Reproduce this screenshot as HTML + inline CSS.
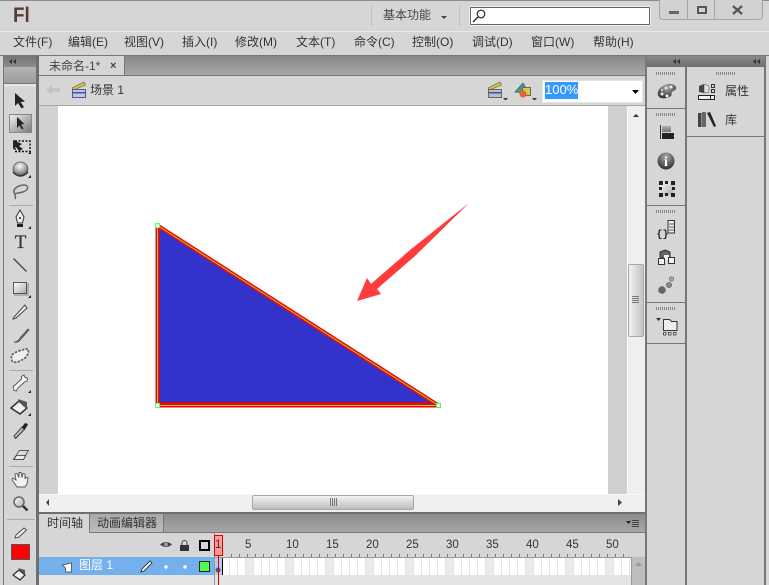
<!DOCTYPE html>
<html><head><meta charset="utf-8">
<style>
html,body{margin:0;padding:0;background:#d6d6d6;}
#r{position:relative;width:769px;height:585px;overflow:hidden;background:#d6d6d6;font-family:"Liberation Sans","Noto Sans CJK SC",sans-serif;font-size:12px;color:#333;}
.a{position:absolute;}
.t{position:absolute;white-space:nowrap;line-height:14px;}
svg{position:absolute;left:0;top:0;}
</style></head><body><div id="r">
<div class="a" style="left:0;top:0;width:769px;height:1px;background:#8a8a8a"></div>
<div class="a" style="left:0;top:31px;width:769px;height:1px;background:#e8e8e8"></div>
<div class="t" style="left:13px;top:3px;font:bold 21px 'Liberation Sans',sans-serif;line-height:26px;color:#5c3a36;transform:scaleX(.9);transform-origin:0 0">Fl</div>
<div class="a" style="left:371px;top:6px;width:1px;height:20px;background:#c2c2c2"></div>
<div class="a" style="left:459px;top:6px;width:1px;height:20px;background:#c2c2c2"></div>
<div class="t" style="left:383px;top:8px;color:#444">基本功能</div>
<div class="a" style="left:441px;top:16px;border:3px solid transparent;border-top:3px solid #444;border-bottom:0"></div>
<div class="a" style="left:470px;top:7px;width:178px;height:16px;background:#fff;border:1px solid #666;outline:1px solid #eee"></div>
<div class="a" style="left:659px;top:0;width:102px;height:19px;background:#d2d2d2;border:1px solid #a4a4a4;border-top:0;border-radius:0 0 4px 4px;box-sizing:content-box"></div>
<div class="a" style="left:687px;top:0;width:1px;height:19px;background:#a4a4a4"></div>
<div class="a" style="left:714px;top:0;width:1px;height:19px;background:#a4a4a4"></div>
<div class="t" style="left:13px;top:35px;">文件(F)</div>
<div class="t" style="left:68px;top:35px;">编辑(E)</div>
<div class="t" style="left:124px;top:35px;">视图(V)</div>
<div class="t" style="left:182px;top:35px;">插入(I)</div>
<div class="t" style="left:235px;top:35px;">修改(M)</div>
<div class="t" style="left:296px;top:35px;">文本(T)</div>
<div class="t" style="left:354px;top:35px;">命令(C)</div>
<div class="t" style="left:412px;top:35px;">控制(O)</div>
<div class="t" style="left:472px;top:35px;">调试(D)</div>
<div class="t" style="left:531px;top:35px;">窗口(W)</div>
<div class="t" style="left:593px;top:35px;">帮助(H)</div>
<div class="a" style="left:0;top:55px;width:769px;height:1px;background:#777"></div>
<div class="a" style="left:4px;top:56px;width:33px;height:11px;background:linear-gradient(#757575,#8c8c8c)"></div>
<div class="a" style="left:4px;top:67px;width:33px;height:16px;background:linear-gradient(#b5b5b5,#9c9c9c)"></div>
<div class="a" style="left:4px;top:83px;width:33px;height:2px;background:#e8e8e8;border-top:1px solid #777"></div>
<div class="a" style="left:3px;top:56px;width:1px;height:529px;background:#777"></div>
<div class="a" style="left:36px;top:56px;width:3px;height:529px;background:#6f6f6f"></div>
<div class="a" style="left:39px;top:56px;width:606px;height:19px;background:linear-gradient(#888,#a8a8a8)"></div>
<div class="a" style="left:39px;top:56px;width:85px;height:19px;background:#d6d6d6;border-right:1px solid #777"></div>
<div class="t" style="left:49px;top:59px;color:#444">未命名-1*</div>
<div class="t" style="left:110px;top:59px;color:#444;font-weight:bold;font-size:11px">×</div>
<div class="a" style="left:39px;top:75px;width:606px;height:1px;background:#777"></div>
<div class="t" style="left:90px;top:83px;color:#333">场景 1</div>
<div class="a" style="left:542px;top:80px;width:101px;height:23px;background:#fff;border:1px solid #e4e4e4;box-sizing:border-box"></div>
<div class="a" style="left:545px;top:82px;width:33px;height:17px;background:#3399ff"></div>
<div class="t" style="left:545px;top:83px;color:#fff;font-size:13px">100%</div>
<div class="a" style="left:39px;top:105px;width:606px;height:1px;background:#a8a8a8"></div>
<div class="a" style="left:39px;top:106px;width:19px;height:388px;background:#d2d2d2"></div>
<div class="a" style="left:58px;top:106px;width:550px;height:388px;background:#fff"></div>
<div class="a" style="left:608px;top:106px;width:20px;height:388px;background:#cfcfcf"></div>
<div class="a" style="left:627px;top:106px;width:18px;height:388px;background:#efefef;border-left:1px solid #fafafa;box-sizing:border-box"></div>
<div class="a" style="left:628px;top:264px;width:16px;height:73px;border:1px solid #a8a8a8;border-radius:2px;background:linear-gradient(90deg,#f2f2f2,#c4c4c4);box-sizing:border-box"></div>
<div class="a" style="left:39px;top:494px;width:606px;height:18px;background:#efefef;border-top:1px solid #fafafa;box-sizing:border-box"></div>
<div class="a" style="left:252px;top:495px;width:162px;height:15px;border:1px solid #a8a8a8;border-radius:2px;background:linear-gradient(#f2f2f2,#bdbdbd);box-sizing:border-box"></div>
<div class="a" style="left:39px;top:512px;width:606px;height:2px;background:#6f6f6f"></div>
<div class="a" style="left:39px;top:514px;width:606px;height:19px;background:linear-gradient(#8c8c8c,#a8a8a8)"></div>
<div class="a" style="left:39px;top:514px;width:50px;height:19px;background:#d6d6d6;border-right:1px solid #777"></div>
<div class="a" style="left:90px;top:514px;width:73px;height:18px;background:linear-gradient(#a8a8a8,#bdbdbd);border-right:1px solid #777"></div>
<div class="t" style="left:47px;top:516px;color:#333">时间轴</div>
<div class="t" style="left:97px;top:516px;color:#333">动画编辑器</div>
<div class="a" style="left:89px;top:532px;width:556px;height:1px;background:#777"></div>
<div class="a" style="left:39px;top:533px;width:606px;height:24px;background:#d6d6d6"></div>
<div class="a" style="left:39px;top:557px;width:175px;height:28px;background:#e4e4e4"></div>
<div class="a" style="left:214px;top:575px;width:417px;height:10px;background:#e4e4e4"></div>
<div class="a" style="left:39px;top:557px;width:175px;height:18px;background:#74b0ec"></div>
<div class="t" style="left:79px;top:558px;color:#fff">图层 1</div>
<div class="a" style="left:214px;top:557px;width:417px;height:18px;background:#fff"></div>
<div class="a" style="left:214px;top:533px;width:1px;height:52px;background:#999"></div>
<div class="a" style="left:631px;top:557px;width:14px;height:28px;background:#bdbdbd;border-left:1px solid #999;box-sizing:border-box"></div>
<div class="t" style="left:245px;top:538px;font-size:11.5px">5</div>
<div class="t" style="left:286px;top:538px;font-size:11.5px">10</div>
<div class="t" style="left:326px;top:538px;font-size:11.5px">15</div>
<div class="t" style="left:366px;top:538px;font-size:11.5px">20</div>
<div class="t" style="left:406px;top:538px;font-size:11.5px">25</div>
<div class="t" style="left:446px;top:538px;font-size:11.5px">30</div>
<div class="t" style="left:486px;top:538px;font-size:11.5px">35</div>
<div class="t" style="left:526px;top:538px;font-size:11.5px">40</div>
<div class="t" style="left:566px;top:538px;font-size:11.5px">45</div>
<div class="t" style="left:606px;top:538px;font-size:11.5px">50</div>
<div class="a" style="left:214px;top:535px;width:9px;height:21px;background:#f99;border:1px solid #d00;box-sizing:border-box"></div>
<div class="t" style="left:215px;top:538px;font-size:11.5px">1</div>
<div class="a" style="left:645px;top:56px;width:2px;height:529px;background:#777"></div>
<div class="a" style="left:685px;top:56px;width:2px;height:529px;background:#777"></div>
<div class="a" style="left:764px;top:56px;width:2px;height:529px;background:#777"></div>
<div class="a" style="left:647px;top:56px;width:118px;height:11px;background:linear-gradient(#8a8a8a,#6f6f6f)"></div>
<div class="a" style="left:647px;top:108px;width:38px;height:1px;background:#777"></div>
<div class="a" style="left:647px;top:205px;width:38px;height:1px;background:#777"></div>
<div class="a" style="left:647px;top:302px;width:38px;height:1px;background:#777"></div>
<div class="a" style="left:647px;top:343px;width:38px;height:1px;background:#777"></div>
<div class="a" style="left:687px;top:136px;width:78px;height:1px;background:#777"></div>
<div class="t" style="left:725px;top:84px;color:#333">属性</div>
<div class="t" style="left:725px;top:113px;color:#333">库</div>
<svg width="769" height="585" viewBox="0 0 769 585">
<defs>
<linearGradient id="g1" x1="0" y1="0" x2="1" y2="1"><stop offset="0" stop-color="#f4f4f4"/><stop offset="1" stop-color="#777"/></linearGradient>
<linearGradient id="g2" x1="0" y1="0" x2="0" y2="1"><stop offset="0" stop-color="#b0b0b0"/><stop offset="1" stop-color="#757575"/></linearGradient>
<linearGradient id="g3" x1="0" y1="0" x2="1" y2="1"><stop offset="0" stop-color="#fff"/><stop offset="1" stop-color="#aaa"/></linearGradient>
<radialGradient id="g4" cx=".45" cy=".3" r=".75"><stop offset="0" stop-color="#fff"/><stop offset=".6" stop-color="#999"/><stop offset="1" stop-color="#444"/></radialGradient>
<radialGradient id="g5" cx=".5" cy=".25" r=".85"><stop offset="0" stop-color="#aaa"/><stop offset=".6" stop-color="#555"/><stop offset="1" stop-color="#222"/></radialGradient>
</defs>
<!-- window buttons -->
<rect x="669" y="11" width="10" height="3" fill="#666"/>
<rect x="698" y="7" width="8" height="6" fill="none" stroke="#555" stroke-width="2"/>
<path d="M733 6l9 8M742 6l-9 8" stroke="#555" stroke-width="2.200" fill="none"/>
<!-- search -->
<circle cx="481" cy="14" r="3.800" fill="none" stroke="#222" stroke-width="1.100"/><path d="M478 17l-5 5" stroke="#222" stroke-width="1.300"/>
<!-- collapse arrows -->
<path d="M12 59l-3 2.500 3 2.500zM16 59l-3 2.500 3 2.500z" fill="#333"/>
<path d="M676 59l-3 2.500 3 2.500zM680 59l-3 2.500 3 2.500zM756 59l-3 2.500 3 2.500zM760 59l-3 2.500 3 2.500z" fill="#333"/>
<!-- back arrow -->
<path d="M46 90l6-5v3h8v4h-8v3z" fill="#c4c4c4"/>
<!-- scene clapper -->
<path d="M72 88l12-6 1.500 3-12 5z" fill="#d6c33c" stroke="#555" stroke-width=".6"/>
<rect x="72.500" y="89.500" width="13" height="8" fill="#c3c6ea" stroke="#55598a"/><rect x="73" y="92" width="12" height="1.500" fill="#4d5290"/>
<path d="M488 88l12-6 1.500 3-12 5z" fill="#d6c33c" stroke="#555" stroke-width=".6"/>
<rect x="488.500" y="89.500" width="13" height="8" fill="#b8bce0" stroke="#666"/><rect x="489" y="92" width="12" height="1.500" fill="#555"/>
<path d="M503 98h5l-2.500 2.500z" fill="#333"/>
<path d="M515 92l8-9 3 5v5z" fill="#3fa08e" stroke="#444" stroke-width=".6"/><rect x="522.500" y="87.500" width="8" height="8" fill="#d7c940" stroke="#666"/><circle cx="523" cy="94" r="3.500" fill="#e8632c"/>
<path d="M532 98h5l-2.500 2.500z" fill="#333"/>
<path d="M632 90h7l-3.500 4z" fill="#000"/>
<!-- scrollbars arrows -->
<path d="M633 117h6l-3-3z" fill="#333"/>
<path d="M632 296.500h7M632 298.500h7M632 300.500h7M632 302.500h7" stroke="#777"/>
<path d="M330.500 498v8M332.500 498v8M334.500 498v8M336.500 498v8" stroke="#777"/>
<path d="M49 499l-3 3.500 3 3.500z" fill="#444"/><path d="M618 499l4 3.500-4 3.500z" fill="#444"/>
<!-- stage art -->
<polygon points="157.500,225.500 157.500,405.500 438.500,405.500" fill="#3333cc"/>
<rect x="158" y="402" width="270" height="3" fill="#e00010"/>
<polygon points="157.500,225.500 157.500,405.500 438.500,405.500" fill="none" stroke="#f00" stroke-width="4" stroke-linejoin="bevel"/>
<polygon points="157.500,225.500 157.500,405.500 438.500,405.500" fill="none" stroke="#7fe04a" stroke-width="1"/>
<rect x="155.500" y="223.500" width="4" height="4" fill="#fff" stroke="#6f6"/>
<rect x="155.500" y="403.500" width="4" height="4" fill="#fff" stroke="#6f6"/>
<rect x="436.500" y="403.500" width="4" height="4" fill="#fff" stroke="#4f4"/>
<polygon points="469,203 410,250 371,284 367,278 357,301 381,294 377,289 415,256" fill="#ff3b3b"/>
<!-- selection tool bg -->
<rect x="9.500" y="114.500" width="22" height="18" fill="url(#g1)" stroke="#888"/>
<!-- tools -->
<path d="M15 93v13l3-3 3.500 5.500 2.500-1.500-3.500-5 4.500-.5z" fill="#222"/>
<path d="M17 117v11l2.500-2.500 2.500 4 1.500-1-2.500-4 3.500-.5z" fill="#222"/>
<rect x="15" y="141" width="15" height="10.500" fill="none" stroke="#111" stroke-width="1.400" stroke-dasharray="2 1.500"/><path d="M13 140v9l3-2 3 4 4-2-4-3 3-2z" fill="#222"/><path d="M28 154h3v-3z" fill="#222"/>
<ellipse cx="20.500" cy="169" rx="7.500" ry="7" fill="url(#g4)" stroke="#555" stroke-width=".7"/><path d="M13 172q7.500 8 15 0" fill="none" stroke="#333" stroke-width="1.400"/><path d="M28 178h3v-3z" fill="#222"/>
<path d="M15 194c-4-4 3-9 9-9 5 0 5 5-1 7-3 1-7 1-8 2 0 2 1 3 0 5" fill="none" stroke="#666" stroke-width="1.500"/>
<rect x="9" y="205" width="24" height="1" fill="#aaa"/>
<path d="M20 210l4 7-1.500 6h-5l-1.500-6z" fill="#eee" stroke="#333"/><path d="M17 224h6v3h-6z" fill="#222"/><circle cx="20" cy="218" r="1" fill="#222"/><path d="M28 229h3v-3z" fill="#222"/>
<text x="20.500" y="248" font-family="Liberation Serif,serif" font-size="19" text-anchor="middle" fill="#333" stroke="#333" stroke-width=".3">T</text>
<path d="M13.500 258.500l13 13" stroke="#444" stroke-width="1.300"/>
<rect x="13.500" y="282.500" width="13" height="11" fill="url(#g3)" stroke="#555"/><path d="M14 295h14v-12" fill="none" stroke="#888"/><path d="M28 298h3v-3z" fill="#222"/>
<path d="M14 317l-1 2 3-1 11-10-2-3z" fill="#eee" stroke="#444"/>
<path d="M14 342c3 0 5-2 6-4l8-9 1 1-8 9c-1 2-4 4-7 3z" fill="#777" stroke="#444" stroke-width=".7"/>
<path d="M12 355c2-3 12-6 16-6 1 3 0 6-3 9-4 3-9 5-12 4-2-2-2-5-1-7z" fill="#eee" stroke="#666" stroke-width="1.800" stroke-dasharray="2.500 1.200"/>
<rect x="9" y="370" width="24" height="1" fill="#aaa"/>
<path d="M13 387l1.500-1.500 7-6.500 0-2.500 2.500-1.500 1 2.500 2.500.5-.5 3-2.500 1-7 6.500-1 2.500-2.500-.5-.5-2.500z" fill="#f2f2f2" stroke="#555" stroke-width=".9"/><path d="M28 393h3v-3z" fill="#222"/>
<path d="M11 408l8-7 8 7-7 6z" fill="#f0f0f0" stroke="#333" stroke-width="1.500"/><path d="M18 399l9 3 0 7-4-3z" fill="#555"/><path d="M28 416h3v-3z" fill="#222"/>
<path d="M14 436l8-9 2.500 2.500-9 9z" fill="url(#g1)" stroke="#333" stroke-width=".9"/><path d="M22 427l3-4 3 1-2 4-2 2z" fill="#222"/>
<path d="M13.500 459.500l6-9h9l-5 9z" fill="url(#g3)" stroke="#555" stroke-width=".9"/><path d="M14 459.500h9.500l2-4h-9z" fill="#eee" stroke="#333" stroke-width=".7"/>
<rect x="9" y="466" width="24" height="1" fill="#aaa"/>
<path d="M17 487l-5-7 1-2 3 2-1-6 2-.5 2 4 0-5 2 0 1 5 1-4 2 .5 0 5 1-2 2 1-1 6-2 3z" fill="#f2f2f2" stroke="#555" stroke-width=".9"/>
<circle cx="19" cy="502" r="5" fill="url(#g3)" stroke="#666" stroke-width="1.500"/><path d="M23 506l4.500 4.500" stroke="#333" stroke-width="2.500"/>
<rect x="7" y="519" width="28" height="1" fill="#aaa"/>
<path d="M15 538l1-3 8-7 2.500 2-8 7.500z" fill="#eee" stroke="#444" stroke-width=".9"/>
<rect x="11.500" y="544.500" width="18" height="15" fill="#f00" stroke="#555"/>
<path d="M13 575l6-5 6 5-5 5z" fill="#f0f0f0" stroke="#333" stroke-width="1.300"/><path d="M18 568l7 2 0 5-3-3z" fill="#555"/>
<!-- right panel grippers -->
<path d="M656 73.500h19M656 114.500h19M656 211.500h19M656 308.500h19M716 73.500h19" stroke="#888" stroke-dasharray="1 1" stroke-width="3" fill="none"/>
<!-- palette -->
<path d="M658 92c1-5 7-8 12-8 4 0 7 2 6 5-1 2-3 2-4 3-1 2 0 3-1 4-3 2-7 3-10 2-2-1-4-3-3-6z" fill="url(#g5)"/><circle cx="662" cy="94" r="1.500" fill="#eee"/><circle cx="667" cy="96" r="1.500" fill="#eee"/><circle cx="671" cy="87" r="1.500" fill="#eee"/><circle cx="666" cy="88" r="1.500" fill="#ddd"/><circle cx="662" cy="90" r="1.200" fill="#ccc"/>
<!-- align -->
<path d="M660.500 125v14" stroke="#333"/><rect x="662" y="126" width="9" height="6" fill="url(#g2)"/><rect x="662" y="133" width="12" height="6" fill="#222"/>
<!-- info -->
<circle cx="666" cy="161" r="8.500" fill="url(#g5)"/><text x="666" y="166" font-family="Liberation Serif,serif" font-weight="bold" font-size="14" text-anchor="middle" fill="#fff">i</text>
<!-- transform -->
<rect x="660" y="182" width="13" height="13" fill="url(#g3)"/><path d="M659 181h4v4h-4zM665 181h3v3h-3zM671 181h4v4h-4zM659 187h3v3h-3zM672 187h3v3h-3zM659 193h4v4h-4zM665 193h3v3h-3zM671 193h4v4h-4z" fill="#222"/>
<!-- actions -->
<path d="M668 220.500h6.500v12.500h-6.500z" fill="#eee" stroke="#333"/><path d="M669 224h5M669 227h5M669 230h5" stroke="#555" fill="none"/>
<text x="656.500" y="237" font-family="Liberation Mono,monospace" font-size="10" font-weight="bold" fill="#222">{}</text>
<!-- components -->
<path d="M665 250l5 2v5l-5 2-5-2v-5z" fill="#666" stroke="#333"/><path d="M664 255h5v5h-5z" fill="#eee"/><path d="M658.500 258.500h6v6h-6zM668.500 257.500h6v6h-6z" fill="#f0f0f0" stroke="#333"/>
<!-- motion -->
<circle cx="662" cy="290" r="3.800" fill="#666"/><circle cx="669" cy="285" r="2.600" fill="#888" stroke="#555" stroke-width=".6"/><circle cx="671.500" cy="279" r="2.200" fill="#aaa" stroke="#555" stroke-width=".6"/>
<!-- project -->
<path d="M656 318h5l-2.500 3z" fill="#333"/><path d="M663.500 319.500h6l2 2h5.500v9h-13.500z" fill="#eee" stroke="#333"/><path d="M663.500 332.500h2.500v2.500h-2.500zM668.500 332.500h2.500v2.500h-2.500zM673.500 332.500h2.500v2.500h-2.500z" fill="#eee" stroke="#333" stroke-width=".8"/>
<!-- properties -->
<path d="M699 86l5-2v9l-5-1z" fill="#444"/><path d="M704 84l5 2v6l-5 1z" fill="#ddd" stroke="#444" stroke-width=".5"/><rect x="711.500" y="84.500" width="3" height="3" fill="none" stroke="#333"/><rect x="711.500" y="89.500" width="3" height="3" fill="none" stroke="#333"/><rect x="698.500" y="95.500" width="16" height="4" fill="#f2f2f2" stroke="#222"/><path d="M710.500 95v4" stroke="#222"/>
<!-- library -->
<rect x="698" y="113" width="3.500" height="14" fill="#444"/><rect x="702" y="112" width="4" height="15" fill="#666"/><path d="M707 113l3-1 6 14-2 1z" fill="#222"/>
<!-- timeline icons -->
<path d="M160 544.500q6-5 12 0q-6 5-12 0z" fill="#444"/><circle cx="166" cy="544.500" r="2" fill="#999"/>
<path d="M182 545v-2a2.500 2.500 0 015 0v2" fill="none" stroke="#444"/><rect x="180" y="545" width="9" height="6" fill="#333"/>
<rect x="200" y="541" width="9" height="9" fill="none" stroke="#000" stroke-width="2"/>
<!-- panel menu -->
<path d="M626 521h5l-2.500 3z" fill="#222"/><path d="M632 520.500h7M632 522.500h7M632 524.500h7M632 526.500h7" stroke="#444"/>
<!-- ruler ticks -->
<path d="M231.500 554v3M239.500 554v3M247.500 554v3M255.500 554v3M263.500 554v3M271.500 554v3M279.500 554v3M287.500 554v3M295.500 554v3M303.500 554v3M311.500 554v3M319.500 554v3M327.500 554v3M335.500 554v3M343.500 554v3M351.500 554v3M359.500 554v3M367.500 554v3M375.500 554v3M383.500 554v3M391.500 554v3M399.500 554v3M407.500 554v3M415.500 554v3M423.500 554v3M431.500 554v3M439.500 554v3M447.500 554v3M455.500 554v3M463.500 554v3M471.500 554v3M479.500 554v3M487.500 554v3M495.500 554v3M503.500 554v3M511.500 554v3M519.500 554v3M527.500 554v3M535.500 554v3M543.500 554v3M551.500 554v3M559.500 554v3M567.500 554v3M575.500 554v3M583.500 554v3M591.500 554v3M599.500 554v3M607.500 554v3M615.500 554v3M623.500 554v3" stroke="#777"/>
<path d="M214 557.500h417" stroke="#999"/>
<!-- frames -->
<path d="M246 558h8v17h-8zM286 558h8v17h-8zM326 558h8v17h-8zM366 558h8v17h-8zM406 558h8v17h-8zM446 558h8v17h-8zM486 558h8v17h-8zM526 558h8v17h-8zM566 558h8v17h-8zM606 558h8v17h-8z" fill="#ebebeb"/>
<path d="M229.500 558v17M237.500 558v17M245.500 558v17M253.500 558v17M261.500 558v17M269.500 558v17M277.500 558v17M285.500 558v17M293.500 558v17M301.500 558v17M309.500 558v17M317.500 558v17M325.500 558v17M333.500 558v17M341.500 558v17M349.500 558v17M357.500 558v17M365.500 558v17M373.500 558v17M381.500 558v17M389.500 558v17M397.500 558v17M405.500 558v17M413.500 558v17M421.500 558v17M429.500 558v17M437.500 558v17M445.500 558v17M453.500 558v17M461.500 558v17M469.500 558v17M477.500 558v17M485.500 558v17M493.500 558v17M501.500 558v17M509.500 558v17M517.500 558v17M525.500 558v17M533.500 558v17M541.500 558v17M549.500 558v17M557.500 558v17M565.500 558v17M573.500 558v17M581.500 558v17M589.500 558v17M597.500 558v17M605.500 558v17M613.500 558v17M621.500 558v17M629.500 558v17" stroke="#e4e4e4"/>
<rect x="215" y="558" width="7" height="17" fill="#b8cbe6"/>
<rect x="222" y="558" width="1" height="17" fill="#000"/>
<circle cx="218" cy="570" r="2.500" fill="#445a88"/>
<path d="M218.500 555v30" stroke="#d00" stroke-width="1"/>
<!-- layer row -->
<path d="M62.500 565l9-2v9h-6v-4z" fill="#fff" stroke="#444" stroke-width=".8"/>
<path d="M141 572l1-3 8-8 2 2-8 8z" fill="#fff" stroke="#222" stroke-width=".8"/>
<circle cx="166" cy="567" r="1.700" fill="#fff"/><circle cx="185" cy="567" r="1.700" fill="#fff"/>
<rect x="199.500" y="561.500" width="10" height="10" fill="#4dff4d" stroke="#222"/>
<path d="M635 566h7l-3.500-4z" fill="#999"/>
</svg>
</div></body></html>
